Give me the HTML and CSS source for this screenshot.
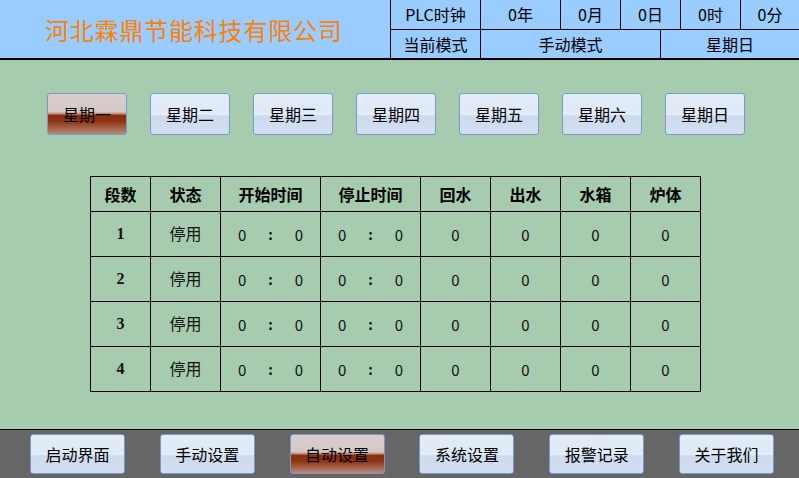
FILE: index.html
```html
<!DOCTYPE html>
<html lang="zh-CN">
<head>
<meta charset="utf-8">
<title>河北霖鼎节能科技有限公司</title>
<link rel="stylesheet" href="styles.css">
</head>
<body>
<div class="screen">
  <header class="header">
    <div class="title">河北霖鼎节能科技有限公司</div>
    <div class="info">
      <div class="info-row top">
        <div class="cell c1">PLC时钟</div>
        <div class="cell c2">0年</div>
        <div class="cell c3">0月</div>
        <div class="cell c3">0日</div>
        <div class="cell c3">0时</div>
        <div class="cell c4">0分</div>
      </div>
      <div class="info-row">
        <div class="cell c1">当前模式</div>
        <div class="cell c5">手动模式</div>
        <div class="cell c6">星期日</div>
      </div>
    </div>
  </header>
  <main class="main">
    <div class="days">
      <button class="btn day active">星期一</button>
      <button class="btn day">星期二</button>
      <button class="btn day">星期三</button>
      <button class="btn day">星期四</button>
      <button class="btn day">星期五</button>
      <button class="btn day">星期六</button>
      <button class="btn day">星期日</button>
    </div>
    <table class="sched">
      <colgroup>
        <col class="w60"><col class="w70"><col class="w100"><col class="w100">
        <col class="w70"><col class="w70"><col class="w70"><col class="w70">
      </colgroup>
      <thead>
        <tr><th>段数</th><th>状态</th><th>开始时间</th><th>停止时间</th><th>回水</th><th>出水</th><th>水箱</th><th>炉体</th></tr>
      </thead>
      <tbody>
        <tr><td class="num">1</td><td class="st">停用</td><td><span class="time"><span>0</span><span class="colon">:</span><span>0</span></span></td><td><span class="time"><span>0</span><span class="colon">:</span><span>0</span></span></td><td>0</td><td>0</td><td>0</td><td>0</td></tr>
        <tr><td class="num">2</td><td class="st">停用</td><td><span class="time"><span>0</span><span class="colon">:</span><span>0</span></span></td><td><span class="time"><span>0</span><span class="colon">:</span><span>0</span></span></td><td>0</td><td>0</td><td>0</td><td>0</td></tr>
        <tr><td class="num">3</td><td class="st">停用</td><td><span class="time"><span>0</span><span class="colon">:</span><span>0</span></span></td><td><span class="time"><span>0</span><span class="colon">:</span><span>0</span></span></td><td>0</td><td>0</td><td>0</td><td>0</td></tr>
        <tr><td class="num">4</td><td class="st">停用</td><td><span class="time"><span>0</span><span class="colon">:</span><span>0</span></span></td><td><span class="time"><span>0</span><span class="colon">:</span><span>0</span></span></td><td>0</td><td>0</td><td>0</td><td>0</td></tr>
      </tbody>
    </table>
  </main>
  <footer class="footer">
    <button class="btn nav">启动界面</button>
    <button class="btn nav">手动设置</button>
    <button class="btn nav active">自动设置</button>
    <button class="btn nav">系统设置</button>
    <button class="btn nav">报警记录</button>
    <button class="btn nav">关于我们</button>
  </footer>
</div>
</body>
</html>
```
FILE: styles.css
```css
* { box-sizing: border-box; }
html, body { margin: 0; padding: 0; }
body {
  width: 799px;
  height: 478px;
  overflow: hidden;
  font-family: "Noto Sans CJK SC", "DejaVu Sans", sans-serif;
  font-size: 16px;
  color: #000;
}
.screen {
  width: 799px;
  height: 478px;
  display: flex;
  flex-direction: column;
}
.header {
  height: 60px;
  background: #99ccff;
  border-bottom: 2px solid #000;
  display: flex;
}
.title {
  width: 391px;
  border-right: 1px solid #000;
  color: #ff8000;
  font-size: 24px;
  letter-spacing: 0.8px;
  padding-left: 45px;
  padding-top: 1px;
  display: flex;
  align-items: center;
  line-height: 1;
}
.info {
  flex: 1;
  display: flex;
  flex-direction: column;
}
.info-row {
  display: flex;
  height: 29px;
}
.info-row.top {
  height: 30px;
  border-bottom: 1px solid #000;
}
.cell {
  display: flex;
  align-items: center;
  justify-content: center;
  border-right: 1px solid #000;
  line-height: 1;
}
.c1 { width: 90px; }
.c2 { width: 80px; }
.c3 { width: 60px; }
.c4 { width: 58px; border-right: none; }
.c5 { width: 180px; }
.c6 { flex: 1; border-right: none; }

.main {
  height: 369px;
  background: #a6cbae;
  padding-top: 33px;
}
.days {
  display: flex;
  gap: 23px;
  padding-left: 47px;
}
.btn {
  font-family: "Noto Sans CJK SC", "DejaVu Sans", sans-serif;
  font-size: 16px;
  color: #000;
  border: 1px solid #7b98c9;
  border-radius: 3px;
  padding: 0;
  background: linear-gradient(#e3ecf9 0%, #dfe9f7 46%, #eaf1fb 49%, #cddbee 55%, #d2dff1 100%);
  line-height: 1;
}
.btn.active {
  background: linear-gradient(#d8cdcd 0%, #d5c7c7 44%, #c4a294 48%, #8b2d0c 54%, #8d3414 68%, #b8897a 100%);
}
.day {
  width: 80px;
  height: 42px;
}
.sched {
  margin-top: 41px;
  margin-left: 90px;
  width: 611px;
  border-collapse: collapse;
  table-layout: fixed;
}
.w60 { width: 60px; }
.w70 { width: 70px; }
.w100 { width: 100px; }
.sched th, .sched td {
  border: 1px solid #000;
  text-align: center;
  padding: 0;
  font-weight: normal;
  line-height: 1;
}
.sched th {
  height: 35px;
  font-weight: bold;
}
.sched td {
  height: 45px;
  font-size: 15px;
  color: #111;
}
.sched td.st { font-size: 16px; padding-bottom: 3px; }
.sched td.num {
  font-family: "Liberation Serif", serif;
  font-weight: bold;
  font-size: 16px;
}
.time {
  display: inline-flex;
  gap: 22px;
  align-items: center;
}
.colon { font-weight: bold; font-size: 14px; }

.footer {
  flex: 1;
  background: #666666;
  border-top: 1px solid #000;
  display: flex;
  align-items: flex-start;
  padding-top: 4px;
  padding-left: 30px;
  gap: 34.8px;
}
.nav {
  width: 95px;
  height: 40px;
}
```
